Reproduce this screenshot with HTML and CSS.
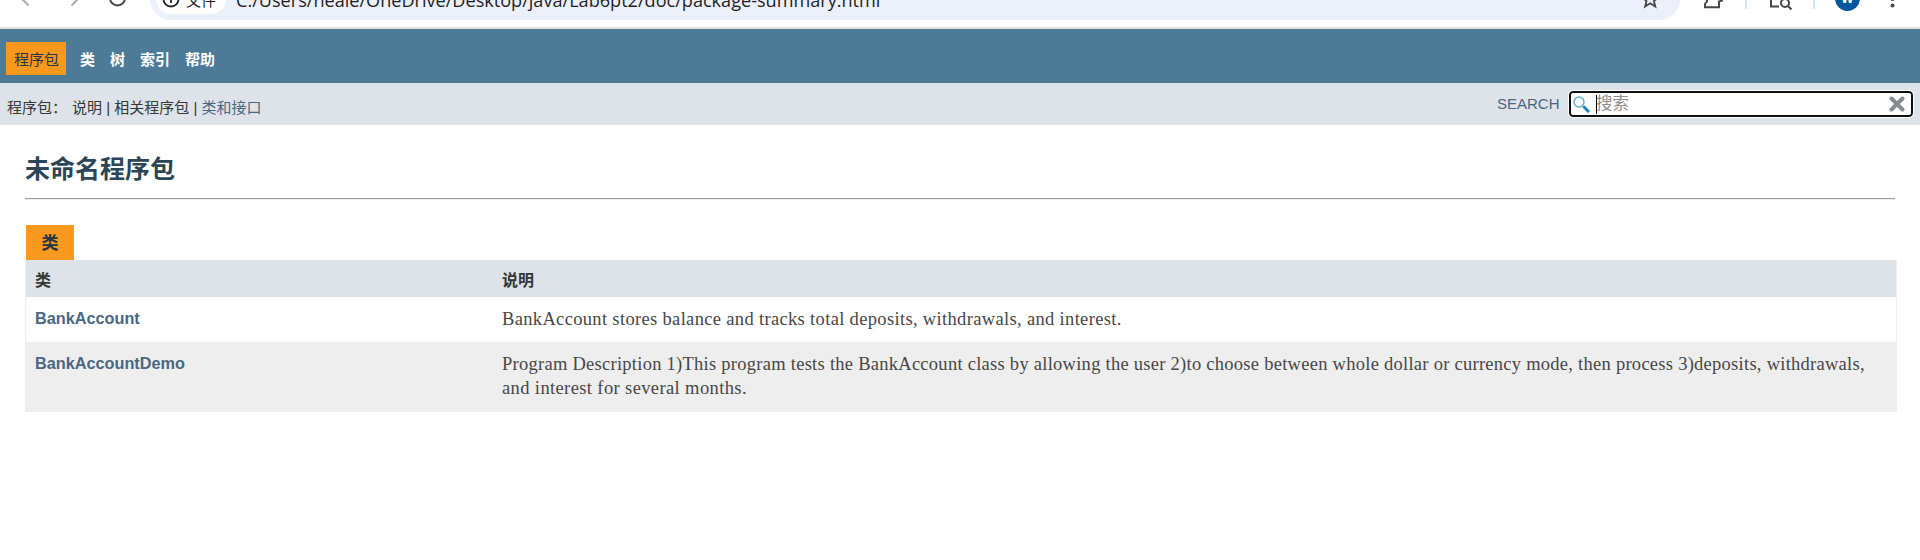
FILE: index.html
```html
<!DOCTYPE html>
<html lang="zh-CN">
<head>
<meta charset="utf-8">
<title>未命名程序包</title>
<link rel="stylesheet" href="styles.css">
</head>
<body>
<div class="browser">
  <svg class="nav-icons" width="150" height="27" viewBox="0 0 150 27" fill="none" stroke-width="2">
    <path d="M28.500 5.500L21 -2" stroke="#a9aaac"/>
    <path d="M71.500 5.500L79 -2" stroke="#a9aaac"/>
    <circle cx="117.500" cy="-2" r="7.500" stroke="#46484a"/>
  </svg>
  <div class="omnibox">
    <div class="chip">
      <svg width="18" height="18" viewBox="0 0 18 18" fill="none" stroke="#1f1f1f" stroke-width="1.800"><circle cx="9" cy="9" r="7.500"/><path d="M9 8v5M9 4.500v2"/></svg>
      <span>文件</span>
    </div>
    <span class="url">C:/Users/neale/OneDrive/Desktop/java/Lab6pt2/doc/package-summary.html</span>
  </div>
  <svg class="tool-icons" width="240" height="27" viewBox="1680 0 240 27" fill="none" stroke="#474747" stroke-width="2">
    <path d="M1707 -1v2.500l-2 2.500v3.200h14v-5.700l3-1V-1"/>
    <path d="M1746 0v9M1814 0v9" stroke="#d3e3fd"/>
    <path d="M1771 0v6.500h8"/><circle cx="1785" cy="3" r="4"/><path d="M1788 6l3.500 3.500"/>
    <circle cx="1847.500" cy="-1.500" r="12.500" fill="#00579f" stroke="none"/>
    <text class="avatar" x="1847.500" y="3" text-anchor="middle">W</text>
    <circle cx="1892.500" cy="5.500" r="2" fill="#474747" stroke="none"/><circle cx="1892.500" cy="-1" r="2" fill="#474747" stroke="none"/>
  </svg>
  <svg class="star" width="16" height="10" viewBox="1642 0 16 10" fill="none" stroke="#474747" stroke-width="1.800"><path d="M1644 -1l2.500 2-1.400 5.500 5.100-3.200 5.100 3.200-1.400-5.500 2.500-2"/></svg>
</div>

<nav class="top-nav">
  <span class="current">程序包</span>
  <a>类</a><a>树</a><a>索引</a><a>帮助</a>
</nav>
<div class="sub-nav">
  <div class="links"><span class="label">程序包：</span><span>说明 | 相关程序包 | <a>类和接口</a></span></div>
  <div class="search">
    <label>SEARCH</label>
    <div class="field">
      <svg class="lens" width="17" height="17" viewBox="0 0 17 17" fill="none"><circle cx="6" cy="6" r="5" stroke="#62b0d2" stroke-width="1.500"/><path d="M9.500 9.500l1.500 1.500" stroke="#62b0d2" stroke-width="1.500"/><path d="M10.500 10.500l5.500 5.500" stroke="#2080b8" stroke-width="3"/></svg>
      <span class="placeholder">搜索</span>
      <svg class="clear" width="16" height="16" viewBox="0 0 16 16"><path d="M2.500 2.500l11 11M13.500 2.500l-11 11" stroke="#868d8f" stroke-width="4" stroke-linecap="round"/></svg>
    </div>
  </div>
</div>

<main>
  <h1>未命名程序包</h1>
  <hr>
  <div class="caption"><span>类</span></div>
  <div class="summary">
    <div class="cell head">类</div><div class="cell head">说明</div>
    <div class="cell name">BankAccount</div>
    <div class="cell desc"><span class="line one">BankAccount stores balance and tracks total deposits, withdrawals, and interest.</span></div>
    <div class="cell name alt">BankAccountDemo</div>
    <div class="cell desc alt"><span class="line two">Program Description 1)This program tests the BankAccount class by allowing the user 2)to choose between whole dollar or currency mode, then process 3)deposits, withdrawals,</span><span class="line three">and interest for several months.</span></div>
  </div>
</main>
</body>
</html>
```
FILE: styles.css
```css
* { box-sizing: border-box; }
body {
  margin: 0;
  height: 560px;
  overflow: hidden;
  background: #fff;
  color: #353833;
  font-family: "Liberation Sans", "Noto Sans CJK SC", sans-serif;
}
svg { display: block; flex: none; }

.browser {
  position: relative;
  display: flex;
  align-items: flex-end;
  height: 29px;
  overflow: hidden;
  border-bottom: 2px solid #dfe0dc;
}
.omnibox {
  display: flex;
  align-items: center;
  flex: none;
  width: 1530px;
  height: 42px;
  margin-bottom: 7px;
  padding-left: 6px;
  border-radius: 21px;
  background: #ecf0fa;
}
.chip {
  display: flex;
  align-items: center;
  gap: 6px;
  width: 70px;
  height: 30px;
  padding-left: 6px;
  border-radius: 15px;
  background: #fff;
  color: #1f1f1f;
  font-size: 15px;
  white-space: nowrap;
}
.url {
  margin-left: 10px;
  padding-top: 1px;
  color: #1f1f1f;
  font-family: "Open Sans", "Noto Sans", sans-serif;
  font-size: 18.1px;
  white-space: nowrap;
}
.avatar { fill: #fff; stroke: none; font-size: 13px; font-weight: bold; }
.star { position: absolute; left: 1642px; top: 0; }

.top-nav {
  display: flex;
  align-items: center;
  height: 54px;
  padding: 5px 0 0 6px;
  background: #4d7a97;
  color: #fff;
  font-size: 15px;
  font-weight: bold;
}
.top-nav a { margin-right: 15px; }
.current {
  width: 60px;
  height: 33px;
  margin-right: 14px;
  padding-left: 8px;
  background: #f8981d;
  color: #253441;
  font-weight: normal;
  line-height: 35px;
}

.sub-nav {
  display: flex;
  justify-content: space-between;
  height: 42px;
  padding: 0 7px;
  background: #dee3e9;
  font-size: 15px;
}
.links { padding-top: 5px; line-height: 39px; white-space: pre; }
.label { display: inline-block; width: 65px; }
.links a, .search label { color: #4a6782; }
.search { display: flex; align-items: flex-start; padding-top: 8px; }
.search label { width: 72px; line-height: 25px; }
.field {
  display: flex;
  align-items: center;
  width: 344px;
  height: 26px;
  padding: 0 6px 0 2px;
  border: 2px solid #101010;
  border-radius: 4px;
  outline: 1px solid #fff;
  background: #fff;
}
.placeholder {
  flex: 1;
  height: 19px;
  margin-left: 6px;
  border-left: 1px solid #000;
  color: #8f8f8f;
  font-size: 16.5px;
  line-height: 17px;
  text-indent: -1px;
}

main { padding: 24px 23px 0 25px; }
h1 {
  margin: 0;
  height: 49px;
  color: #2c4557;
  font-size: 25px;
  line-height: 41px;
}
hr {
  width: 1870px;
  height: 2px;
  margin: 0 0 25px;
  border: 0;
  border-top: 1px solid #999;
  border-bottom: 1px solid #eee;
}
.caption { padding-left: 1px; }
.caption span {
  display: block;
  width: 48px;
  height: 35px;
  background: #f8981d;
  color: #253441;
  font-size: 17px;
  font-weight: bold;
  line-height: 38px;
  text-align: center;
}
.summary {
  display: grid;
  grid-template-columns: 467px 1fr;
  grid-template-rows: 37px 45px 70px;
  border: solid #eee;
  border-width: 0 1px;
}
.cell { padding-left: 9px; white-space: nowrap; }
.head { background: #dee3e9; font-size: 16px; font-weight: bold; line-height: 42px; }
.name { color: #4a6782; font-size: 16.25px; font-weight: bold; line-height: 42px; }
.alt { background: #eee; }
.desc {
  padding-top: 10px;
  color: #474747;
  font-family: "Liberation Serif", serif;
  font-size: 18.5px;
  line-height: 24px;
}
.line { display: block; }
.one { letter-spacing: 0.335px; }
.two { letter-spacing: 0.265px; }
.three { letter-spacing: 0.38px; }
```
